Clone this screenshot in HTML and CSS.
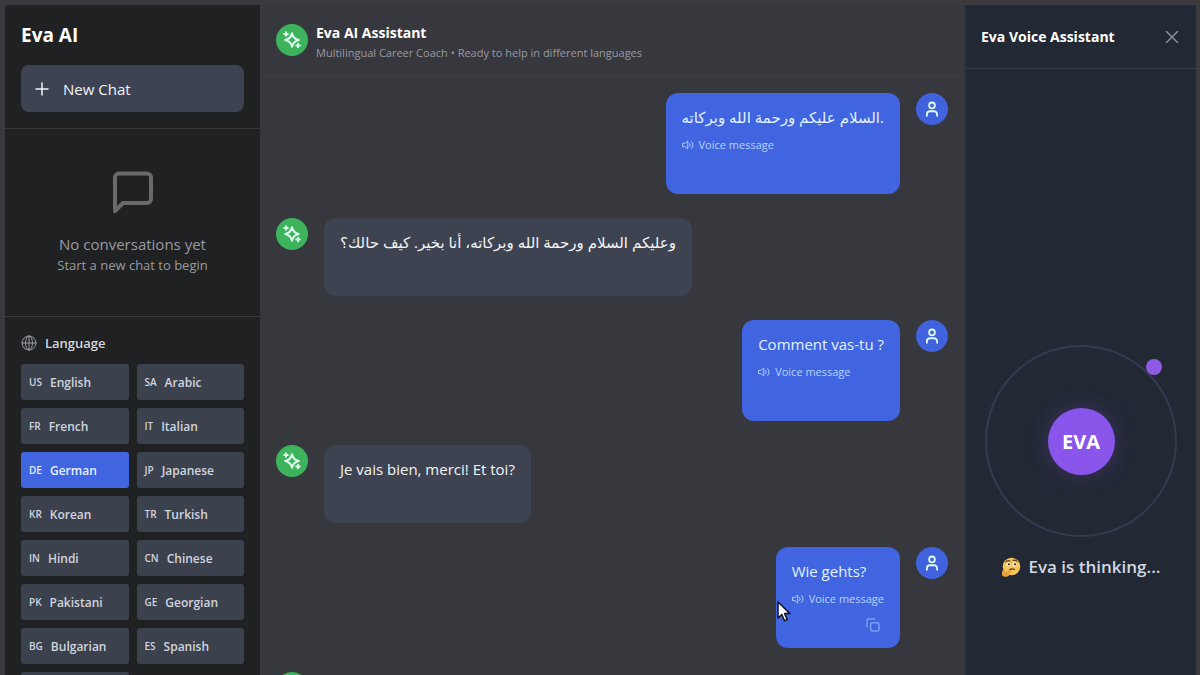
FILE: index.html
```html
<!DOCTYPE html>
<html lang="en">
<head>
<meta charset="utf-8">
<meta name="viewport" content="width=device-width, initial-scale=1">
<title>Eva AI</title>
<link rel="stylesheet" href="styles.css">
</head>
<body>
<svg class="defs" aria-hidden="true">
  <symbol id="sparkle" viewBox="0 0 20 20">
    <path d="M10 3.2c.9 4.2 2.6 5.900 6.800 6.800-4.200.900-5.900 2.600-6.800 6.800-.900-4.200-2.600-5.900-6.800-6.800 4.200-.900 5.900-2.600 6.800-6.800z"/>
    <path d="M4 2.200v3.600M2.200 4h3.600M16 13.700v3.600M14.200 15.500h3.600"/>
  </symbol>
  <symbol id="user" viewBox="0 0 20 20">
    <circle cx="10" cy="6" r="3.200"/>
    <path d="M4.300 17.500v-1.500a3.500 3.500 0 0 1 3.500-3.500h4.400a3.500 3.500 0 0 1 3.500 3.500v1.500"/>
  </symbol>
  <symbol id="speaker" viewBox="0 0 14 12">
    <path d="M1 4.300h2L6.200 1.800v8.400L3 7.700H1zM8.300 4.300a2.600 2.600 0 0 1 0 3.400M10.300 2.300a5.600 5.600 0 0 1 0 7.400"/>
  </symbol>
  <symbol id="copy" viewBox="0 0 14 14">
    <rect x="4.700" y="4.700" width="8.300" height="8.300" rx="1.500"/>
    <path d="M1 9V2.200C1 1.500 1.500 1 2.200 1H9"/>
  </symbol>
</svg>
<div class="app">
  <aside class="sidebar">
    <header class="sidebar-head">
      <h1 class="brand">Eva AI</h1>
      <button class="new-chat" type="button">
        <svg class="plus" viewBox="0 0 14 14" aria-hidden="true"><path d="M7 1v12M1 7h12"/></svg>
        New Chat
      </button>
    </header>
    <section class="empty">
      <svg class="empty-icon" viewBox="0 0 48 48" aria-hidden="true"><path d="M42 30a4 4 0 0 1-4 4H14l-8 8V8.500a4 4 0 0 1 4-4h28a4 4 0 0 1 4 4z"/></svg>
      <p class="empty-title">No conversations yet</p>
      <p class="empty-text">Start a new chat to begin</p>
    </section>
    <section class="languages">
      <h2 class="lang-title">
        <svg class="globe" viewBox="0 0 16 16" aria-hidden="true"><circle cx="8" cy="8" r="7"/><ellipse cx="8" cy="8" rx="3.500" ry="7"/><path d="M1.200 8h13.600M8 1v14"/></svg>
        Language
      </h2>
      <div class="lang-grid">
        <button class="lang" type="button"><span class="code">US</span>English</button>
        <button class="lang" type="button"><span class="code">SA</span>Arabic</button>
        <button class="lang" type="button"><span class="code">FR</span>French</button>
        <button class="lang" type="button"><span class="code">IT</span>Italian</button>
        <button class="lang active" type="button" aria-pressed="true"><span class="code">DE</span>German</button>
        <button class="lang" type="button"><span class="code">JP</span>Japanese</button>
        <button class="lang" type="button"><span class="code">KR</span>Korean</button>
        <button class="lang" type="button"><span class="code">TR</span>Turkish</button>
        <button class="lang" type="button"><span class="code">IN</span>Hindi</button>
        <button class="lang" type="button"><span class="code">CN</span>Chinese</button>
        <button class="lang" type="button"><span class="code">PK</span>Pakistani</button>
        <button class="lang" type="button"><span class="code">GE</span>Georgian</button>
        <button class="lang" type="button"><span class="code">BG</span>Bulgarian</button>
        <button class="lang" type="button"><span class="code">ES</span>Spanish</button>
        <button class="lang" type="button" aria-label="More languages"></button>
      </div>
    </section>
  </aside>

  <main class="chat">
    <header class="chat-head">
      <span class="avatar bot"><svg><use href="#sparkle"/></svg></span>
      <div>
        <h2 class="chat-title">Eva AI Assistant</h2>
        <p class="chat-sub">Multilingual Career Coach • Ready to help in different languages</p>
      </div>
    </header>
    <div class="messages">
      <article class="row mine">
        <div class="bubble">
          <p class="text">السلام عليكم ورحمة الله وبركاته.</p>
          <p class="voice"><svg><use href="#speaker"/></svg>Voice message</p>
          <div class="actions"></div>
        </div>
        <span class="avatar user"><svg><use href="#user"/></svg></span>
      </article>
      <article class="row">
        <span class="avatar bot"><svg><use href="#sparkle"/></svg></span>
        <div class="bubble">
          <p class="text">وعليكم السلام ورحمة الله وبركاته، أنا بخير. كيف حالك؟</p>
          <div class="actions"></div>
        </div>
      </article>
      <article class="row mine">
        <div class="bubble">
          <p class="text">Comment vas-tu ?</p>
          <p class="voice"><svg><use href="#speaker"/></svg>Voice message</p>
          <div class="actions"></div>
        </div>
        <span class="avatar user"><svg><use href="#user"/></svg></span>
      </article>
      <article class="row">
        <span class="avatar bot"><svg><use href="#sparkle"/></svg></span>
        <div class="bubble">
          <p class="text">Je vais bien, merci! Et toi?</p>
          <div class="actions"></div>
        </div>
      </article>
      <article class="row mine">
        <div class="bubble">
          <p class="text">Wie gehts?</p>
          <p class="voice"><svg><use href="#speaker"/></svg>Voice message</p>
          <div class="actions"><button class="copy" type="button" aria-label="Copy message"><svg><use href="#copy"/></svg></button></div>
          <svg class="cursor" viewBox="0 0 14 21" aria-hidden="true"><path d="M1 1v16l3.800-3.400 2.700 6.200 2.800-1.200-2.700-6H13z"/></svg>
        </div>
        <span class="avatar user"><svg><use href="#user"/></svg></span>
      </article>
      <article class="row">
        <span class="avatar bot"><svg><use href="#sparkle"/></svg></span>
      </article>
    </div>
  </main>

  <aside class="panel">
    <header class="panel-head">
      <h2 class="panel-title">Eva Voice Assistant</h2>
      <button class="close" type="button" aria-label="Close"><svg viewBox="0 0 14 14"><path d="M1.500 1.500l11 11M12.500 1.500l-11 11"/></svg></button>
    </header>
    <div class="panel-body">
      <div class="ring">
        <div class="core">EVA</div>
        <span class="dot"></span>
      </div>
      <p class="status">
        <svg class="face" viewBox="0 0 20 20" aria-hidden="true">
          <circle cx="10.500" cy="9.500" r="8.800" fill="#f6c65b"/>
          <circle cx="7.500" cy="7.600" r="2" fill="#fff"/><circle cx="13.700" cy="7.600" r="2" fill="#fff"/>
          <circle cx="7.900" cy="7.300" r="1.100" fill="#3b2a1c"/><circle cx="14.100" cy="7.300" r="1.100" fill="#3b2a1c"/>
          <path d="M4.800 4.800q2-2 4.200-.8M12 3.400q2.300-.8 4 1M8.500 12.800q2.500-1.600 5-.2" fill="none" stroke="#5b3b1a" stroke-width="1.200" stroke-linecap="round"/>
          <path d="M1.500 19c-1-3-.4-6 1.400-6.500 1.100 0 1.100 1.500.9 2.500l5.600-1.500c1.500-.2 1.500 1.600.2 2l-1.800.7c1.500 1.900-.6 3.800-3.800 3.500z" fill="#e9a23b"/>
        </svg>
        Eva is thinking...
      </p>
    </div>
  </aside>
</div>
</body>
</html>
```
FILE: styles.css
```css
* { box-sizing: border-box; }

body {
  margin: 0;
  background: #3a393e;
  color: #f3f4f6;
  font-family: "Open Sans", "Noto Sans", "DejaVu Sans", sans-serif;
}

h1, h2, p { margin: 0; }

button {
  border: 0;
  color: inherit;
  font-family: inherit;
  cursor: pointer;
}

svg {
  display: block;
  flex: none;
  fill: none;
  stroke: currentColor;
  stroke-linecap: round;
  stroke-linejoin: round;
}

.defs { position: absolute; width: 0; height: 0; }

.app {
  display: grid;
  grid-template-columns: 255px minmax(0, 1fr) 232px;
  height: 100vh;
  padding: 5px 4px 0 5px;
  overflow: hidden;
}

/* Sidebar */
.sidebar {
  background: #202123;
  border-radius: 4px 0 0 0;
  overflow: hidden;
}

.sidebar-head {
  padding: 16px;
  border-bottom: 1px solid #38393c;
}

.brand {
  font-size: 19px;
  line-height: 28px;
  color: #fff;
}

.new-chat {
  display: flex;
  align-items: center;
  gap: 14px;
  width: 100%;
  height: 47px;
  margin-top: 16px;
  padding: 0 14px;
  border-radius: 8px;
  background: #3d4352;
  font-size: 15px;
  font-weight: 500;
}

.plus { width: 14px; height: 14px; stroke-width: 1.5; }

.empty {
  display: flex;
  flex-direction: column;
  align-items: center;
  padding: 40px 16px;
  border-bottom: 1px solid #38393c;
  color: #9a9b9f;
}

.empty-icon { width: 48px; height: 48px; stroke: #6a6a6c; stroke-width: 4; }
.empty-title { margin-top: 16px; font-size: 15px; line-height: 22px; }
.empty-text { font-size: 13px; line-height: 21px; }

.languages { padding: 15px 16px; }

.lang-title {
  display: flex;
  align-items: center;
  gap: 8px;
  font-size: 13px;
  font-weight: 600;
  line-height: 22px;
  color: #d6d8dc;
}

.globe { width: 16px; height: 16px; stroke: #9a9da3; }

.lang-grid {
  display: grid;
  grid-template-columns: 1fr 1fr;
  gap: 8px;
  margin-top: 10px;
}

.lang {
  display: flex;
  align-items: center;
  gap: 8px;
  height: 36px;
  padding: 0 8px;
  border-radius: 3px;
  background: #3c414e;
  color: #d0d5df;
  font-size: 12px;
  font-weight: 600;
}

.code { font-size: 10px; }
.lang.active { background: #4164e0; color: #e6f1ff; }

/* Conversation */
.chat { background: #37373e; overflow: hidden; }

.chat-head {
  display: flex;
  align-items: flex-start;
  gap: 8px;
  height: 72px;
  padding: 19px 16px;
  border-bottom: 1px solid #3c3c46;
}

.chat-title { font-size: 14px; line-height: 18px; color: #fff; }
.chat-sub { font-size: 11px; line-height: 22px; color: #989aa1; }

.avatar {
  display: flex;
  align-items: center;
  justify-content: center;
  flex: none;
  width: 32px;
  height: 32px;
  border-radius: 50%;
}

.avatar svg { width: 20px; height: 20px; stroke-width: 2; color: #dffbf0; }
.avatar.user svg { width: 18px; height: 18px; }
.avatar.bot { background: #3db45c; }
.avatar.user { background: #4062dc; }

.messages {
  display: flex;
  flex-direction: column;
  gap: 24px;
  padding: 16px;
}

.row { display: flex; align-items: flex-start; gap: 16px; }
.row.mine { justify-content: flex-end; }

.bubble {
  position: relative;
  padding: 11px 16px 10px;
  border-radius: 12px;
  background: #3d4350;
}

.mine .bubble { background: #4164e0; color: #e0f3ff; }
.text { font-size: 15px; line-height: 26px; }

.voice {
  display: flex;
  align-items: center;
  gap: 4px;
  margin-top: 7px;
  font-size: 11px;
  line-height: 16px;
  color: #b5d4fa;
}

.voice svg { width: 13px; height: 12px; }

.actions {
  display: flex;
  justify-content: flex-end;
  align-items: flex-start;
  height: 25px;
  margin-top: 6px;
}

.copy { padding: 5px 4px; background: none; color: #7d9ff0; }
.copy svg { width: 14px; height: 14px; stroke-width: 1.5; }

.cursor {
  position: absolute;
  left: 1px;
  top: 54px;
  width: 14px;
  height: 21px;
  fill: #fff;
  stroke: #111522;
  stroke-width: 1.5;
}

/* Voice panel */
.panel { background: #222935; border-left: 2px solid #2c3240; }

.panel-head {
  display: flex;
  align-items: center;
  justify-content: space-between;
  height: 64px;
  padding: 0 16px 0 15px;
  border-bottom: 1px solid #353d4a;
}

.panel-title { font-size: 14px; font-weight: 700; color: #fff; }
.close { padding: 1px; background: none; color: #8f96a3; }
.close svg { width: 14px; height: 14px; stroke-width: 1.4; }

.panel-body {
  display: flex;
  flex-direction: column;
  align-items: center;
  gap: 16px;
  padding-top: 276px;
}

.ring {
  position: relative;
  display: grid;
  place-items: center;
  width: 192px;
  height: 192px;
  border: 2px solid #343b50;
  border-radius: 50%;
}

.core {
  display: grid;
  place-items: center;
  width: 67px;
  height: 67px;
  border-radius: 50%;
  background: #8a55ea;
  box-shadow: 0 0 20px #8a55ea40;
  color: #fff;
  font-size: 20px;
  font-weight: 700;
}

.dot {
  position: absolute;
  top: 12px;
  right: 13px;
  width: 16px;
  height: 16px;
  border-radius: 50%;
  background: #8d5ae4;
}

.status {
  display: flex;
  align-items: center;
  gap: 7px;
  font-size: 17px;
  line-height: 28px;
  font-weight: 600;
  color: #d3d8e0;
}

.face { width: 20px; height: 20px; stroke: none; }
```
